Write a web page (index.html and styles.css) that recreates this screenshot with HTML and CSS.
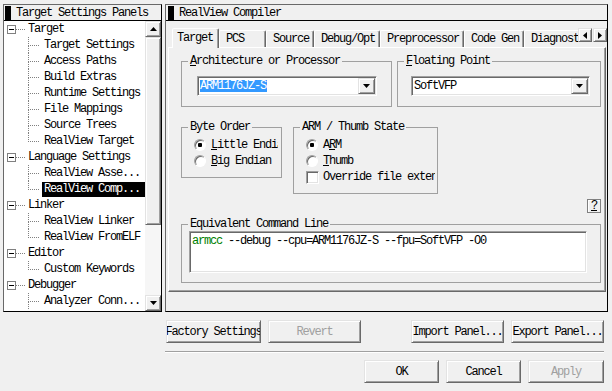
FILE: index.html
```html
<!DOCTYPE html>
<html>
<head lang="en">
    <meta charset="UTF-8">
    <title>Target Settings</title>
    <link rel="stylesheet" href="styles.css">
</head>
<body>
<div class="dialog">
    <div class="panes">
        <!-- left: panel tree -->
        <div class="pane tree-pane">
            <div class="pane-title">
                <svg class="grip" width="6" height="14" viewBox="0 0 6 14"><rect width="6" height="14" fill="#000"/><path d="M0 1h2l4 3v2zM0 6h2l4 3v2zM0 11h2l3 3H3z" fill="#e6d200"/></svg>
                <span>Target Settings Panels</span>
            </div>
            <div class="tree-body">
                <div class="tree">
                    <div class="node parent"><span class="expander"></span><span class="twig"></span><span class="label">Target</span></div>
                    <div class="node"><span class="stem"></span><span class="label">Target Settings</span></div>
                    <div class="node"><span class="stem"></span><span class="label">Access Paths</span></div>
                    <div class="node"><span class="stem"></span><span class="label">Build Extras</span></div>
                    <div class="node"><span class="stem"></span><span class="label">Runtime Settings</span></div>
                    <div class="node"><span class="stem"></span><span class="label">File Mappings</span></div>
                    <div class="node"><span class="stem"></span><span class="label">Source Trees</span></div>
                    <div class="node last"><span class="stem"></span><span class="label">RealView Target</span></div>
                    <div class="node parent"><span class="expander"></span><span class="twig"></span><span class="label">Language Settings</span></div>
                    <div class="node"><span class="stem"></span><span class="label">RealView Asse...</span></div>
                    <div class="node last"><span class="stem"></span><span class="label selected">RealView Comp...</span></div>
                    <div class="node parent"><span class="expander"></span><span class="twig"></span><span class="label">Linker</span></div>
                    <div class="node"><span class="stem"></span><span class="label">RealView Linker</span></div>
                    <div class="node last"><span class="stem"></span><span class="label">RealView FromELF</span></div>
                    <div class="node parent"><span class="expander"></span><span class="twig"></span><span class="label">Editor</span></div>
                    <div class="node last"><span class="stem"></span><span class="label">Custom Keywords</span></div>
                    <div class="node parent"><span class="expander"></span><span class="twig"></span><span class="label">Debugger</span></div>
                    <div class="node"><span class="stem"></span><span class="label">Analyzer Conn...</span></div>
                </div>
                <div class="vscroll">
                    <div class="raised sb-btn"><svg width="7" height="4"><path d="M3.5 0L7 4H0z"/></svg></div>
                    <div class="raised sb-thumb"></div>
                    <div class="sb-track"></div>
                    <div class="raised sb-btn"><svg width="7" height="4"><path d="M0 0h7L3.5 4z"/></svg></div>
                </div>
            </div>
        </div>

        <!-- right: compiler settings -->
        <div class="pane settings-pane">
            <div class="pane-title">
                <svg class="grip" width="6" height="14" viewBox="0 0 6 14"><rect width="6" height="14" fill="#000"/><path d="M0 1h2l4 3v2zM0 6h2l4 3v2zM0 11h2l3 3H3z" fill="#e6d200"/></svg>
                <span>RealView Compiler</span>
            </div>
            <div class="tab-row">
                <div class="tab-strip">
                    <div class="tab active">Target</div>
                    <div class="tab">PCS</div>
                    <div class="tab">Source</div>
                    <div class="tab">Debug/Opt</div>
                    <div class="tab">Preprocessor</div>
                    <div class="tab">Code Gen</div>
                    <div class="tab">Diagnostics</div>
                </div>
                <div class="tab-scroll">
                    <div class="raised tab-arrow"><svg width="4" height="7"><path d="M4 0v7L0 3.5z"/></svg></div>
                    <div class="raised tab-arrow"><svg width="4" height="7"><path d="M0 0v7l4-3.5z"/></svg></div>
                </div>
            </div>
            <div class="tab-page">
                <div class="group-row">
                    <fieldset class="group arch">
                        <legend><u>A</u>rchitecture or Processor</legend>
                        <div class="group-body">
                            <div class="combo">
                                <div class="combo-value"><span class="hl">ARM1176JZ-S</span></div>
                                <div class="raised combo-btn"><svg width="7" height="4"><path d="M0 0h7L3.5 4z"/></svg></div>
                            </div>
                        </div>
                    </fieldset>
                    <fieldset class="group fpu">
                        <legend><u>F</u>loating Point</legend>
                        <div class="group-body">
                            <div class="combo">
                                <div class="combo-value"><span>SoftVFP</span></div>
                                <div class="raised combo-btn"><svg width="7" height="4"><path d="M0 0h7L3.5 4z"/></svg></div>
                            </div>
                        </div>
                    </fieldset>
                </div>

                <div class="group-row row-two">
                    <fieldset class="group byte-order">
                        <legend>Byte Order</legend>
                        <div class="group-body">
                            <div class="opt"><span class="radio on"></span><span><u>L</u>ittle Endian</span></div>
                            <div class="opt"><span class="radio"></span><span><u>B</u>ig Endian</span></div>
                        </div>
                    </fieldset>
                    <fieldset class="group state">
                        <legend>ARM / Thumb State</legend>
                        <div class="group-body">
                            <div class="opt"><span class="radio on"></span><span>A<u>R</u>M</span></div>
                            <div class="opt"><span class="radio"></span><span><u>T</u>humb</span></div>
                            <div class="opt"><span class="check"></span><span>Override file extension</span></div>
                        </div>
                    </fieldset>
                </div>

                <div class="help-row"><div class="help">?</div></div>

                <fieldset class="group cmd">
                    <legend>Equivalent Command Line</legend>
                    <div class="group-body">
                        <div class="cmdline"><span class="tool">armcc</span> --debug --cpu=ARM1176JZ-S --fpu=SoftVFP -O0</div>
                    </div>
                </fieldset>
            </div>
        </div>
    </div>

    <div class="actions panel-actions">
        <div class="raised btn btn-factory">Factory Settings</div>
        <div class="raised btn btn-revert disabled">Revert</div>
        <div class="raised btn btn-import">Import Panel...</div>
        <div class="raised btn btn-export">Export Panel...</div>
    </div>
    <div class="separator"></div>
    <div class="actions dialog-actions">
        <div class="raised btn">OK</div>
        <div class="raised btn">Cancel</div>
        <div class="raised btn btn-apply disabled">Apply</div>
    </div>
</div>
</body>
</html>
```

FILE: styles.css
```css
* {
    margin: 0;
    padding: 0;
    box-sizing: border-box;
}

body {
    background: #f0f0f0;
    color: #000;
    font-family: "Liberation Mono", "DejaVu Sans Mono", monospace;
    font-size: 12px;
    letter-spacing: -1.2px;
    line-height: 12px;
}

u {
    text-decoration: underline;
    text-underline-offset: 1px;
}

svg path {
    fill: #000;
}

.dialog {
    width: 612px;
    height: 391px;
    padding: 4px 0 0 3px;
}

/* classic 3d edges */
.raised {
    background: #f0f0f0;
    border: 1px solid;
    border-color: #e3e3e3 #696969 #696969 #e3e3e3;
    box-shadow: inset 1px 1px #fff, inset -1px -1px #a0a0a0;
}

.panes {
    display: flex;
    height: 308px;
}

.pane {
    display: flex;
    flex-direction: column;
    border: 1px solid;
    border-color: #696969 #000 #000 #696969;
}

.pane-title {
    flex: none;
    display: flex;
    align-items: center;
    gap: 5px;
    height: 16px;
    padding-left: 1px;
    border-bottom: 1px solid #000;
}

.grip {
    flex: none;
}

/* tree */
.tree-pane {
    width: 159px;
}

.tree-body {
    flex: 1;
    min-height: 0;
    display: flex;
    background: #fff;
}

.tree {
    flex: 1;
    min-width: 0;
    overflow: hidden;
}

.node {
    display: flex;
    align-items: center;
    height: 16px;
}

.expander {
    flex: none;
    display: flex;
    align-items: center;
    justify-content: center;
    width: 9px;
    height: 9px;
    margin-left: 3px;
    border: 1px solid #808080;
    background: #fff;
}

.expander::before {
    content: "";
    width: 5px;
    height: 1px;
    background: #000;
}

.twig {
    flex: none;
    width: 9px;
    border-top: 1px dotted #808080;
}

.stem {
    flex: none;
    align-self: stretch;
    display: flex;
    flex-direction: column;
    width: 11px;
    margin-left: 24px;
}

.stem::before {
    content: "";
    height: 8px;
    border-left: 1px dotted #808080;
    border-bottom: 1px dotted #808080;
}

.stem::after {
    content: "";
    flex: 1;
    border-left: 1px dotted #808080;
}

.last .stem::after {
    border-left: 0;
}

.label {
    flex: 1;
    min-width: 0;
    margin-left: 3px;
    padding-left: 2px;
    line-height: 15px;
    white-space: nowrap;
    overflow: hidden;
}

.parent .label {
    margin-left: 1px;
}

.label.selected {
    background: #000;
    color: #fff;
}

.vscroll {
    flex: none;
    width: 16px;
    display: flex;
    flex-direction: column;
    background: #f6f6f6;
}

.sb-btn {
    height: 16px;
    display: flex;
    align-items: center;
    justify-content: center;
}

.sb-thumb {
    height: 188px;
}

.sb-track {
    flex: 1;
}

/* settings pane */
.settings-pane {
    width: 443px;
    margin-left: 3px;
}

.settings-pane .pane-title {
    padding-left: 2px;
}

.tab-row {
    flex: none;
    display: flex;
    height: 20px;
    margin-top: 7px;
}

.tab-strip {
    flex: 1;
    min-width: 0;
    display: flex;
    align-items: flex-end;
    padding-left: 6px;
    overflow: hidden;
}

.tab {
    flex: none;
    min-width: 47px;
    height: 17px;
    margin-bottom: 1px;
    padding: 2px 4px 0 6px;
    border: 1px solid;
    border-bottom: 0;
    border-color: #fff #696969 transparent #fff;
    border-radius: 2px 2px 0 0;
    box-shadow: inset -1px 0 #a0a0a0;
    white-space: nowrap;
}

.tab.active {
    position: relative;
    z-index: 1;
    height: 20px;
    margin-bottom: 0;
    padding: 3px 5px 0 4px;
    background: #f0f0f0;
}

.tab-scroll {
    flex: none;
    display: flex;
    gap: 1px;
}

.tab-arrow {
    width: 14px;
    height: 14px;
    display: flex;
    align-items: center;
    justify-content: center;
}

.tab-page {
    width: 438px;
    height: 245px;
    margin: -1px 0 0 2px;
    padding: 7px 4px 0 12px;
    border: 1px solid;
    border-color: #fff #696969 #696969 #fff;
    box-shadow: inset -1px -1px #a0a0a0;
}

.group-row {
    display: flex;
    align-items: flex-start;
    gap: 5px;
}

.row-two {
    gap: 11px;
    margin-top: 14px;
}

.group {
    min-width: 0;
    padding: 0;
    border: 1px solid #a0a0a0;
}

.group legend {
    margin-left: 6px;
    padding: 0 2px;
    line-height: 12px;
}

.arch {
    width: 211px;
}

.arch .group-body {
    padding: 9px 14px 10px 15px;
}

.fpu {
    flex: 1;
}

.fpu .group-body {
    padding: 9px 10px 10px 13px;
}

.combo {
    display: flex;
    height: 20px;
    padding: 1px;
    border: 1px solid;
    border-color: #a0a0a0 #fff #fff #a0a0a0;
    box-shadow: inset 1px 1px #696969, inset -1px -1px #e3e3e3;
    background: #fff;
}

.combo-value {
    flex: 1;
    display: flex;
    align-items: center;
    padding-left: 1px;
}

.hl {
    background: #3399ff;
    color: #fff;
    padding-right: 1px;
}

.combo-btn {
    flex: none;
    width: 17px;
    display: flex;
    align-items: center;
    justify-content: center;
}

.byte-order {
    width: 101px;
}

.byte-order .group-body {
    padding: 4px 3px 8px 12px;
}

.state {
    width: 145px;
}

.state .group-body {
    padding: 4px 2px 8px 12px;
}

.opt {
    display: flex;
    align-items: center;
    gap: 5px;
    height: 16px;
    white-space: nowrap;
    overflow: hidden;
}

.radio {
    flex: none;
    width: 12px;
    height: 12px;
    border: 1px solid;
    border-color: #a0a0a0 #fff #fff #a0a0a0;
    border-radius: 50%;
    box-shadow: inset 1px 1px #696969;
    background: #fff;
}

.radio.on {
    background: radial-gradient(circle, #000 0 2px, #fff 2.5px);
}

.check {
    flex: none;
    width: 13px;
    height: 13px;
    margin-right: -1px;
    border: 1px solid;
    border-color: #a0a0a0 #fff #fff #a0a0a0;
    box-shadow: inset 1px 1px #696969, inset -1px -1px #e3e3e3;
    background: #fff;
}

.help-row {
    display: flex;
    justify-content: flex-end;
    margin-top: 5px;
}

.help {
    width: 14px;
    height: 14px;
    display: flex;
    align-items: center;
    justify-content: center;
    border: 1px solid #808080;
    box-shadow: inset 1px 1px #fff;
    text-decoration: underline;
}

.cmd {
    margin-top: 5px;
}

.cmd .group-body {
    padding: 1px 13px 9px 7px;
}

.cmdline {
    height: 42px;
    padding: 3px 2px;
    border: 1px solid;
    border-color: #a0a0a0 #fff #fff #a0a0a0;
    box-shadow: inset 1px 1px #696969, inset -1px -1px #e3e3e3;
    background: #fff;
    white-space: nowrap;
}

.tool {
    color: #008000;
}

/* bottom buttons */
.actions {
    display: flex;
    gap: 7px;
    width: 438px;
    margin-left: 163px;
}

.panel-actions {
    margin-top: 8px;
}

.dialog-actions {
    justify-content: flex-end;
    margin-top: 7px;
}

.btn {
    flex: none;
    width: 75px;
    height: 23px;
    display: flex;
    align-items: center;
    justify-content: center;
    white-space: nowrap;
    overflow: hidden;
}

.btn-factory {
    width: 95px;
}

.btn-revert,
.btn-import,
.btn-export {
    width: 93px;
}

.btn-import {
    margin-left: auto;
}

.btn-apply {
    width: 76px;
}

.btn.disabled {
    color: #a0a0a0;
}

.separator {
    width: 439px;
    height: 2px;
    margin: 8px 0 0 162px;
    border-top: 1px solid #a0a0a0;
    border-bottom: 1px solid #fff;
}
```
